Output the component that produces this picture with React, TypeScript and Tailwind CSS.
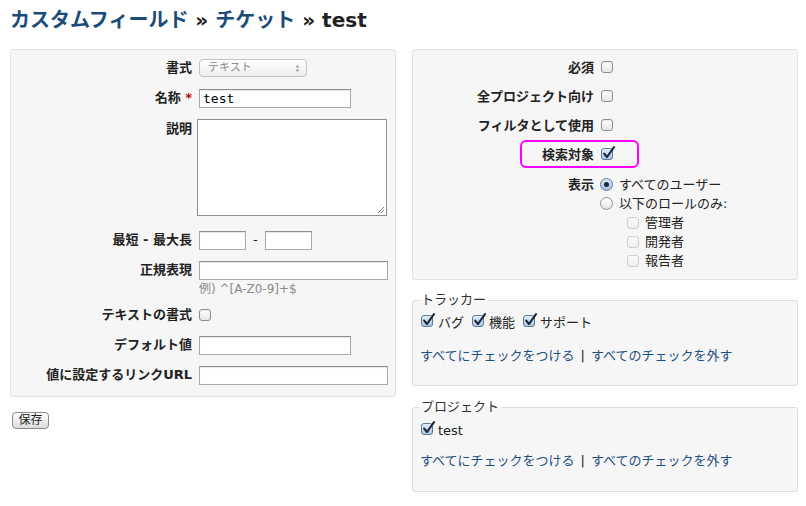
import React from "react";

const Check = ({ checked = false, disabled = false }: { checked?: boolean; disabled?: boolean }) => {
  if (checked) {
    return (
      <span className="relative inline-block w-[12px] h-[12px] shrink-0 rounded-[3px] border border-[#5d7a99] bg-linear-to-b from-[#e3eefa] to-[#a8c5e8]">
        <svg className="absolute left-[0px] top-[-3px]" width="14" height="14" viewBox="0 0 14 14">
          <path d="M2.2 7.6 L5 11 L12 1.2" fill="none" stroke="#1c2633" strokeWidth="2.1" strokeLinecap="round" strokeLinejoin="round" />
        </svg>
      </span>
    );
  }
  if (disabled) {
    return (
      <span className="inline-block w-[12px] h-[12px] shrink-0 rounded-[3px] border border-[#cfcfcf] bg-linear-to-b from-[#fbfbfb] to-[#efefef]" />
    );
  }
  return (
    <span className="inline-block w-[12px] h-[12px] shrink-0 rounded-[3px] border border-[#8e8e8e] bg-linear-to-b from-white to-[#e6e6e6] shadow-[inset_0_1px_1px_rgba(0,0,0,0.08)]" />
  );
};

const Radio = ({ checked = false }: { checked?: boolean }) => (
  <span
    className={
      checked
        ? "inline-flex items-center justify-center w-[13px] h-[13px] shrink-0 rounded-full border border-[#5f7d9c] bg-linear-to-b from-[#d9e8f8] to-[#9fc0e6]"
        : "inline-block w-[13px] h-[13px] shrink-0 rounded-full border border-[#8e8e8e] bg-linear-to-b from-white to-[#e4e4e4]"
    }
  >
    {checked && <span className="block w-[5px] h-[5px] rounded-full bg-[#1f2a38]" />}
  </span>
);

const Input = ({ w, value }: { w: string; value?: string }) => (
  <div
    className={`${w} h-[19px] border border-[#a9a9a9] border-t-[#8f8f8f] bg-white shadow-[inset_0_1px_1px_rgba(0,0,0,0.1)] flex items-center pl-[3px] font-['DejaVu_Sans_Mono',monospace] text-[13px] leading-[17px] text-black`}
  >
    {value}
  </div>
);

const Label = ({ children }: { children: React.ReactNode }) => (
  <div className="w-[181px] shrink-0 text-right font-bold text-[13px] leading-[20px] text-[#222]">{children}</div>
);

const LeftRow = ({ label, children, h = "h-[22px]", mt }: { label: React.ReactNode; children: React.ReactNode; h?: string; mt: string }) => (
  <div className={`flex items-center ${h} ${mt}`}>
    <Label>{label}</Label>
    <div className="ml-[7px] flex items-center">{children}</div>
  </div>
);

const Links = () => (
  <div className="flex items-center text-[13px] leading-[18px] text-[#1d4f80]">
    <span>すべてにチェックをつける</span>
    <span className="mx-[6px] text-[#222]">|</span>
    <span>すべてのチェックを外す</span>
  </div>
);

export default function App() {
  return (
    <div className="w-[806px] h-[506px] bg-white font-['DejaVu_Sans','Noto_Sans_CJK_JP',sans-serif] text-[#222] pl-[10px] overflow-hidden">
      <h2 className="pt-[8px] h-[32px] text-[20px] leading-[24px] font-bold whitespace-nowrap">
        <span className="text-[#1a4b7b]">カスタムフィールド</span>
        <span className="text-[#222]"> » </span>
        <span className="text-[#1a4b7b]">チケット</span>
        <span className="text-[#222]"> » test</span>
      </h2>
      <div className="mt-[17px] flex gap-[16px] items-start">
        {/* left column */}
        <div className="w-[386px] shrink-0">
          <div className="border border-[#e2e2e2] rounded-[3px] bg-[#f6f6f6] pt-[7px] pb-[10px]">
            <LeftRow label="書式" mt="mt-0">
              <div className="w-[108px] h-[18px] rounded-[4px] border border-[#c3c3c3] bg-linear-to-b from-white to-[#eeeeee] flex items-center justify-between pl-[8px] pr-[6px] text-[11px] leading-[14px] text-[#8a8a8a]">
                <span>テキスト</span>
                <svg width="5" height="9" viewBox="0 0 5 9">
                  <path d="M0.5 3.5 L2.5 1 L4.5 3.5 Z M0.5 5.5 L2.5 8 L4.5 5.5 Z" fill="#9a9a9a" />
                </svg>
              </div>
            </LeftRow>
            <LeftRow
              label={
                <>
                  名称 <span className="text-[#bb0000]">*</span>
                </>
              }
              mt="mt-[8px]"
            >
              <Input w="w-[152px]" value="test" />
            </LeftRow>
            <div className="flex items-start mt-[10px]">
              <Label>説明</Label>
              <div className="ml-[5px] w-[190px] h-[97px] border border-[#8f8f8f] bg-white relative">
                <svg className="absolute right-[1px] bottom-[1px]" width="8" height="8" viewBox="0 0 8 8">
                  <path d="M7 1 L1 7 M7 4 L4 7" stroke="#777" strokeWidth="1" />
                </svg>
              </div>
            </div>
            <LeftRow label="最短 - 最大長" mt="mt-[13px]">
              <Input w="w-[47px]" />
              <span className="mx-[7px] text-[13px] leading-[18px]">-</span>
              <Input w="w-[47px]" />
            </LeftRow>
            <LeftRow label="正規表現" mt="mt-[8px]">
              <Input w="w-[189px]" />
            </LeftRow>
            <div className="flex h-[14px] mt-[1px] items-center">
              <div className="w-[188px] shrink-0" />
              <span className="text-[12px] leading-[14px] text-[#8a8a8a]">例) ^[A-Z0-9]+$</span>
            </div>
            <LeftRow label="テキストの書式" mt="mt-[8px]">
              <Check />
            </LeftRow>
            <LeftRow label="デフォルト値" mt="mt-[8px]">
              <Input w="w-[152px]" />
            </LeftRow>
            <LeftRow label="値に設定するリンクURL" mt="mt-[8px]">
              <Input w="w-[189px]" />
            </LeftRow>
          </div>
          <button className="mt-[15px] ml-[2px] w-[37px] h-[17px] rounded-[4px] border border-[#8a8a8a] bg-linear-to-b from-white to-[#dcdcdc] text-[12px] leading-[15px] text-[#222] flex items-center justify-center">
            保存
          </button>
        </div>

        {/* right column */}
        <div className="w-[386px] shrink-0">
          <div className="border border-[#e2e2e2] rounded-[3px] bg-[#f6f6f6] pt-[8px] pb-[9px]">
            <div className="flex items-center h-[20px]">
              <Label>必須</Label>
              <div className="ml-[7px]"><Check /></div>
            </div>
            <div className="flex items-center h-[20px] mt-[9px]">
              <Label>全プロジェクト向け</Label>
              <div className="ml-[7px]"><Check /></div>
            </div>
            <div className="flex items-center h-[20px] mt-[9px]">
              <Label>フィルタとして使用</Label>
              <div className="ml-[7px]"><Check /></div>
            </div>
            <div className="relative flex items-center h-[20px] mt-[9px]">
              <Label>検索対象</Label>
              <div className="ml-[7px]"><Check checked /></div>
              <div className="absolute left-[107px] top-[-5px] w-[119px] h-[28px] border-2 border-[#ff00ff] rounded-[6px]" />
            </div>
            <div className="flex items-start mt-[10px]">
              <Label>
                <span className="block leading-[19px]">表示</span>
              </Label>
              <div className="ml-[6px] flex flex-col text-[13px] leading-[19px]">
                <div className="flex items-center h-[19px] gap-[6px]">
                  <Radio checked />
                  <span>すべてのユーザー</span>
                </div>
                <div className="flex items-center h-[19px] gap-[6px]">
                  <Radio />
                  <span>以下のロールのみ:</span>
                </div>
                {["管理者", "開発者", "報告者"].map((r) => (
                  <div key={r} className="flex items-center h-[19px] gap-[6px] pl-[27px]">
                    <Check disabled />
                    <span>{r}</span>
                  </div>
                ))}
              </div>
            </div>
          </div>

          <fieldset className="mt-[12px] border border-[#dedede] rounded-[3px] bg-[#f6f6f6] px-[6px] pb-[20px]">
            <legend className="px-[2px] text-[13px] leading-[16px] text-[#333]">トラッカー</legend>
            <div className="mt-[6px] flex items-center h-[18px] text-[13px] leading-[18px]">
              <span className="ml-[2px]"><Check checked /></span>
              <span className="ml-[5px]">バグ</span>
              <span className="ml-[8px]"><Check checked /></span>
              <span className="ml-[5px]">機能</span>
              <span className="ml-[8px]"><Check checked /></span>
              <span className="ml-[5px]">サポート</span>
            </div>
            <div className="mt-[15px] ml-[1px]">
              <Links />
            </div>
          </fieldset>

          <fieldset className="mt-[13px] border border-[#dedede] rounded-[3px] bg-[#f6f6f6] px-[6px] pb-[21px]">
            <legend className="px-[2px] text-[13px] leading-[16px] text-[#333]">プロジェクト</legend>
            <div className="mt-[7px] flex items-center h-[18px] text-[13px] leading-[18px]">
              <span className="ml-[2px]"><Check checked /></span>
              <span className="ml-[5px]">test</span>
            </div>
            <div className="mt-[12px] ml-[1px]">
              <Links />
            </div>
          </fieldset>
        </div>
      </div>
    </div>
  );
}
